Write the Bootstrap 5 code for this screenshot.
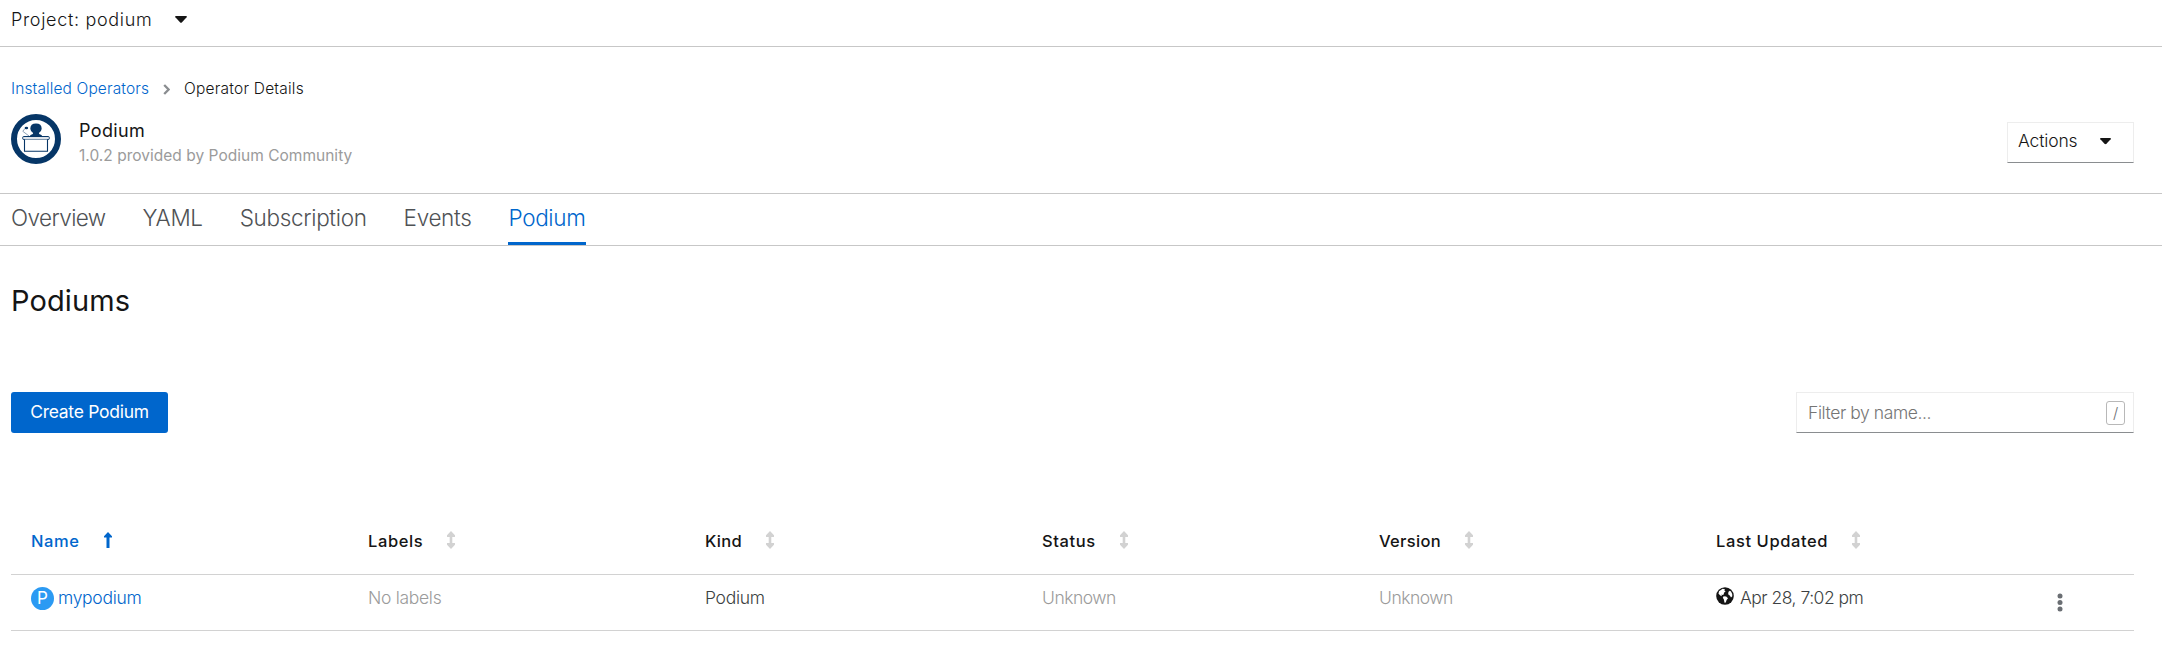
<!DOCTYPE html>
<html lang="en">
<head>
<meta charset="utf-8">
<meta name="viewport" content="width=device-width, initial-scale=1">
<title>Podium · Operator Details</title>
<link href="https://cdn.jsdelivr.net/npm/bootstrap@5.3.0/dist/css/bootstrap.min.css" rel="stylesheet">
<style>
body{font-family:Inter,"Liberation Sans",sans-serif;font-size:17.5px;font-weight:300;line-height:24px;color:#151515;background:#fff;overflow:hidden}
a{color:#06c;text-decoration:none}
svg{display:block;flex:none}
.project-bar{height:47px;border-bottom:1px solid #c7c7c7;padding:0 0 7px 11px;gap:24px}
.project-bar .btn{font-size:18px;font-weight:300;letter-spacing:.67px;color:#151515;gap:23px}
.page-head{height:147px;border-bottom:1px solid #c7c7c7;padding:30px 28px 0 11px}
.crumbs{font-size:15.5px;height:24px;margin-bottom:13px;gap:14px}
.crumbs a{letter-spacing:.12px}
.crumbs .here{letter-spacing:.22px}
.op-text{margin-left:18px}
.op-title{font-size:18px;font-weight:400;letter-spacing:.35px;line-height:26px;margin:4px 0 0}
.op-sub{font-size:15.5px;font-weight:400;color:#9b9b9b;line-height:24px;letter-spacing:.02px}
.boxed{border:1px solid #ededed;border-bottom-color:#8a8d90;border-radius:0;height:41px}
.actions{width:127px;padding:0 22px 2px 10px;margin-top:8px;font-size:17.5px;font-weight:300;letter-spacing:-.15px;color:#151515}
.tabs{height:52px;border-bottom:1px solid #c7c7c7;padding-left:11px;gap:37px;font-size:22.5px;letter-spacing:-.33px}
.tabs .nav-link{padding:0;color:#4f5255;line-height:47px;height:51px;border-bottom:3px solid transparent}
.tabs .nav-link.active{color:#06c;border-color:#06c}
.tabs .t-over{letter-spacing:-.6px}
.body-pad{padding:0 28px 0 11px}
h1{font-size:29px;font-weight:400;letter-spacing:.1px;line-height:36px;margin:37px 0 73px}
.toolbar{height:42px}
.create{height:41px;width:157px;background:#06c;border:0;border-radius:3px;color:#fff;font-size:17.5px;letter-spacing:-.27px;padding:0}
.filter{width:338px;padding:0 8px 0 11px;color:#757575;letter-spacing:-.42px}
.key{width:19px;height:24px;border:1px solid #b8b8b8;border-radius:3px;font-size:15px;line-height:22px;text-align:center;color:#6a6e73}
.grid-table{margin-top:74px}
.g-row{display:grid;grid-template-columns:repeat(6,337px) 1fr;border-bottom:1px solid #d2d2d2;padding-left:20px}
.g-head{height:67px;font-size:16.5px;font-weight:500}
.g-head>div{height:66px}
.g-head svg{margin-left:24px;margin-top:-2px}
.g-line{height:56px;color:#3c3f42}
.g-line>div{height:46px}
.g-muted{color:#9b9b9b}
.ls-a{letter-spacing:.6px}.ls-b{letter-spacing:.3px}.ls-c{letter-spacing:-.3px}.ls-d{letter-spacing:-.5px}
.globe{margin:0 6px 4px 0}
.kebab{margin:8px 0 0 4px}
.kind{width:23px;height:23px;border-radius:50%;background:#2b9af3;color:#fff;font-size:17px;font-weight:400;line-height:23px;text-align:center;margin-right:4px}
</style>
</head>
<body>
<svg width="0" height="0" class="position-absolute">
  <symbol id="caret" viewBox="0 0 12 7"><path d="M.8 0H11.2Q12.3.3 11.6 1.2L6.8 6.4Q6 7.2 5.2 6.4L.4 1.2Q-.3.3.8 0Z" fill="#151515"/></symbol>
  <symbol id="sort" viewBox="0 0 8 18"><path d="M4 0 8 4.200V5.900H5.300V12.100H8V13.800L4 18 0 13.800V12.100H2.700V5.900H0V4.200Z" fill="#d2d2d2"/></symbol>
</svg>

<header class="project-bar d-flex align-items-center">
  <button class="btn p-0 border-0 d-flex align-items-center">Project: podium <svg width="12" height="7"><use href="#caret"/></svg></button>
</header>

<section class="page-head">
  <nav class="crumbs d-flex align-items-center">
    <a href="#">Installed Operators</a>
    <svg width="7" height="11" viewBox="0 0 7 11"><path d="M1.2 1 5.6 5.5 1.2 10" fill="none" stroke="#8a8d90" stroke-width="2.300"/></svg>
    <span class="here">Operator Details</span>
  </nav>
  <div class="d-flex justify-content-between align-items-start">
    <div class="d-flex">
      <svg width="50" height="50" viewBox="0 0 50 50">
        <circle cx="25" cy="25" r="22" fill="#fff" stroke="#063667" stroke-width="6"/>
        <path d="M18.6 22.5q.3-1.8 3.2-2.6l.3-.8q-2.8-2.2-2.8-4.3 0-5.4 5.700-5.400t5.700 5.400q0 2.100-2.800 4.300l.3.8q2.900.8 3.200 2.600z" fill="#063667"/>
        <path d="m18 22-6.200-4.700 2-2.600" fill="none" stroke="#7189a3" stroke-width=".8"/>
        <ellipse cx="15.400" cy="14" rx="1.800" ry="1.300" fill="#063667"/>
        <rect x="11.700" y="22.500" width="26.600" height="3" rx="1" fill="#dde3ea" stroke="#063667" stroke-width="1"/>
        <path d="M13.500 25.500V37.300H36.500V25.500" fill="#fff" stroke="#063667" stroke-width="1.100"/>
      </svg>
      <div class="op-text">
        <h2 class="op-title">Podium</h2>
        <div class="op-sub">1.0.2 provided by Podium Community</div>
      </div>
    </div>
    <button class="btn boxed actions d-flex align-items-center justify-content-between">Actions <svg width="11" height="6.500"><use href="#caret"/></svg></button>
  </div>
</section>

<nav class="nav tabs">
  <a class="nav-link t-over" href="#">Overview</a>
  <a class="nav-link" href="#">YAML</a>
  <a class="nav-link" href="#">Subscription</a>
  <a class="nav-link" href="#">Events</a>
  <a class="nav-link active" href="#">Podium</a>
</nav>

<main class="body-pad">
  <h1>Podiums</h1>
  <div class="toolbar d-flex justify-content-between">
    <button class="btn create">Create Podium</button>
    <div class="boxed filter d-flex align-items-center justify-content-between"><span>Filter by name...</span><span class="key">/</span></div>
  </div>

  <div class="grid-table">
    <div class="g-row g-head">
      <div class="d-flex align-items-center"><a href="#" class="ls-a">Name</a><svg width="8" height="16" viewBox="0 0 8 16"><path d="M4 0 8 4.200V5.600H5.500V16H2.500V5.600H0V4.200Z" fill="#06c"/></svg></div>
      <div class="d-flex align-items-center"><span class="ls-a">Labels</span><svg width="8" height="18"><use href="#sort"/></svg></div>
      <div class="d-flex align-items-center"><span class="ls-b">Kind</span><svg width="8" height="18"><use href="#sort"/></svg></div>
      <div class="d-flex align-items-center"><span class="ls-a">Status</span><svg width="8" height="18"><use href="#sort"/></svg></div>
      <div class="d-flex align-items-center"><span class="ls-b">Version</span><svg width="8" height="18"><use href="#sort"/></svg></div>
      <div class="d-flex align-items-center"><span class="ls-a">Last Updated</span><svg width="8" height="18"><use href="#sort"/></svg></div>
      <div></div>
    </div>
    <div class="g-row g-line">
      <div class="d-flex align-items-center"><span class="kind">P</span><a href="#" class="ls-c">mypodium</a></div>
      <div class="d-flex align-items-center g-muted ls-c">No labels</div>
      <div class="d-flex align-items-center ls-c">Podium</div>
      <div class="d-flex align-items-center g-muted ls-d">Unknown</div>
      <div class="d-flex align-items-center g-muted ls-d">Unknown</div>
      <div class="d-flex align-items-center ls-d">
        <svg class="globe" width="18" height="18" viewBox="0 0 18 18"><circle cx="9" cy="9" r="8.800" fill="#151515"/><path d="M3 4.200 6.600 1.700 9 2.200 8.300 3.600 9.600 4.300 7.800 6 8 7.300 6.400 8 5.300 7.600 6 9.300 4.300 8.600 2.500 6.800ZM7.600 9.300 10.200 9.600 12 11.200 10.600 13 9.800 15.600 8.500 15.800 7.900 12.600 6.800 10.800ZM12.500 4.800 13.800 3.800 15 4.600 16.200 7 16.300 9.200 15 10.400 13.800 8.600 12.500 7.800 12.200 6.400Z" fill="#fff"/></svg>
        <span>Apr 28, 7:02 pm</span>
      </div>
      <div class="d-flex align-items-center"><svg class="kebab" width="6" height="19" viewBox="0 0 6 19" fill="#6a6e73"><circle cx="3" cy="3" r="2.500"/><circle cx="3" cy="9.500" r="2.500"/><circle cx="3" cy="16" r="2.500"/></svg></div>
    </div>
  </div>
</main>
<script src="https://cdn.jsdelivr.net/npm/bootstrap@5.3.0/dist/js/bootstrap.bundle.min.js"></script>
</body>
</html>
